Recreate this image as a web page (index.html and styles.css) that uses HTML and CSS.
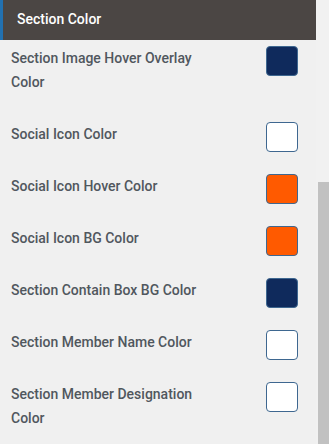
FILE: index.html
```html
<!DOCTYPE html>
<html lang="en">
<head>
    <meta charset="UTF-8">
    <meta name="viewport" content="width=device-width, initial-scale=1.0">
    <title>Section Color</title>
    <link rel="stylesheet" href="styles.css">
</head>
<body>

<div class="page">
    <div class="panel">
        <div class="panel-head">Section Color</div>

        <div class="panel-body">
            <div class="row">
                <div class="row-label">Section Image Hover Overlay Color</div>
                <span class="swatch navy"></span>
            </div>
            <div class="row">
                <div class="row-label">Social Icon Color</div>
                <span class="swatch white"></span>
            </div>
            <div class="row">
                <div class="row-label">Social Icon Hover Color</div>
                <span class="swatch orange"></span>
            </div>
            <div class="row">
                <div class="row-label">Social Icon BG Color</div>
                <span class="swatch orange"></span>
            </div>
            <div class="row">
                <div class="row-label">Section Contain Box BG Color</div>
                <span class="swatch navy"></span>
            </div>
            <div class="row">
                <div class="row-label">Section Member Name Color</div>
                <span class="swatch white"></span>
            </div>
            <div class="row">
                <div class="row-label">Section Member Designation Color</div>
                <span class="swatch white"></span>
            </div>
        </div>
    </div>

    <div class="scroll-track">
        <div class="scroll-thumb"></div>
    </div>
</div>

</body>
</html>
```

FILE: styles.css
```css
body {
    margin: 0;
    font-family: Roboto, "Liberation Sans", Arial, sans-serif;
    background-color: #f1f1f1;
    height: 444px;
    overflow: hidden;
}
.page {
    display: flex;
    height: 444px;
}
.panel {
    width: 316px;
    background-color: #f0f0f0;
}
.panel-head {
    height: 40px;
    line-height: 39px;
    padding-left: 14px;
    border-left: 3px solid #2271b1;
    background-color: #4b4644;
    color: #fff;
    font-size: 14px;
    font-weight: 500;
}
.panel-body {
    padding: 6px 18px 0 11px;
}
.row {
    display: flex;
    justify-content: space-between;
    align-items: flex-start;
}
.row-label {
    width: 200px;
    padding-bottom: 28px;
    font-size: 14px;
    line-height: 24px;
    font-weight: 500;
    color: #50575e;
}
.swatch {
    width: 30px;
    height: 28px;
    border: 1px solid #3e6790;
    border-radius: 4px;
}
.swatch.navy {
    background-color: #0f2a5c;
}
.swatch.white {
    background-color: #fff;
}
.swatch.orange {
    background-color: #ff5a00;
}
.scroll-track {
    flex: 1;
    display: flex;
    flex-direction: column;
    padding-left: 2px;
}
.scroll-thumb {
    margin-top: 182px;
    flex: 1;
    background-color: #c1c1c1;
}
```
